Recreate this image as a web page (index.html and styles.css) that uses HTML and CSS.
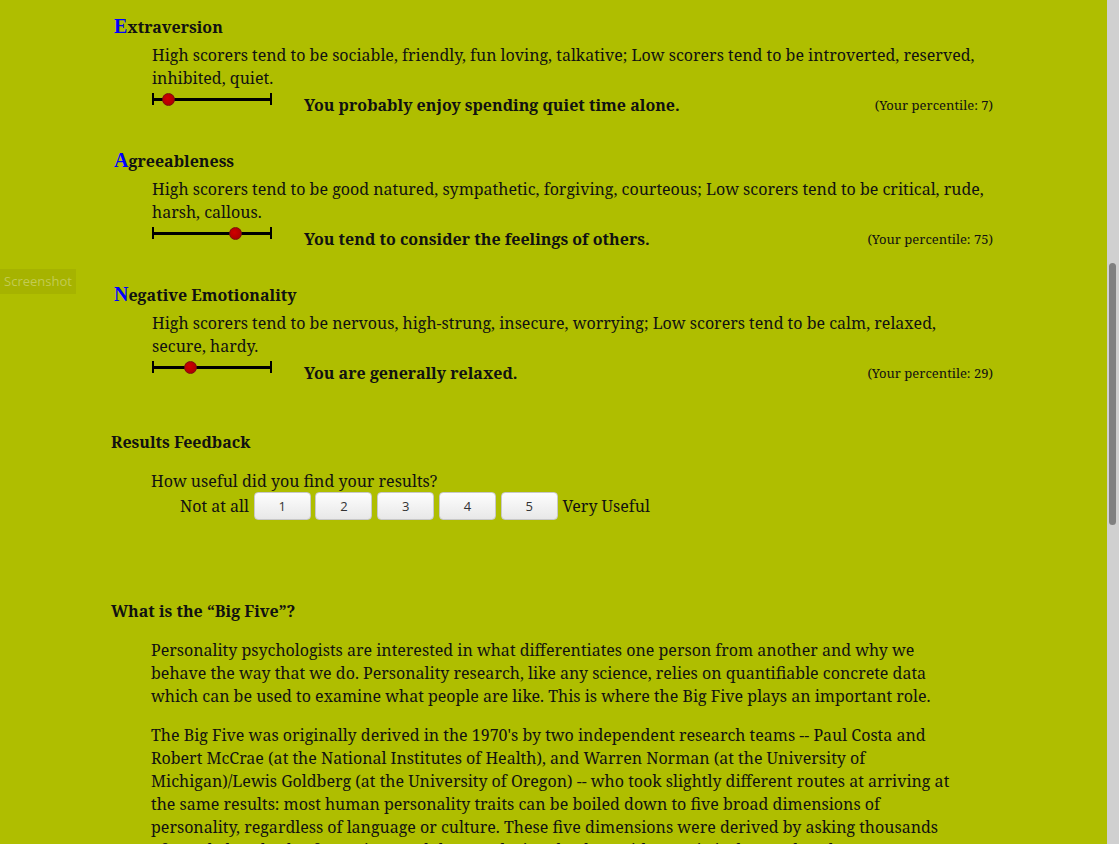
FILE: index.html
```html
<!DOCTYPE html>
<html>
<head>
<meta charset="utf-8">
<link rel="stylesheet" href="styles.css">
</head>
<body>
<div class="tab">Screenshot</div>
<div class="page">
  <div class="trait">
    <h3 class="trait-title"><span class="init">E</span>xtraversion</h3>
    <div class="trait-body">
      <p class="desc">High scorers tend to be sociable, friendly, fun loving, talkative; Low scorers tend to be introverted, reserved, inhibited, quiet.</p>
      <div class="result">
        <div class="scale"><span class="dot" style="left: 12%"></span></div>
        <div class="verdict">You probably enjoy spending quiet time alone.</div>
        <div class="pct">(Your percentile: 7)</div>
      </div>
    </div>
  </div>
  <div class="trait">
    <h3 class="trait-title"><span class="init">A</span>greeableness</h3>
    <div class="trait-body">
      <p class="desc">High scorers tend to be good natured, sympathetic, forgiving, courteous; Low scorers tend to be critical, rude, harsh, callous.</p>
      <div class="result">
        <div class="scale"><span class="dot" style="left: 70%"></span></div>
        <div class="verdict">You tend to consider the feelings of others.</div>
        <div class="pct">(Your percentile: 75)</div>
      </div>
    </div>
  </div>
  <div class="trait">
    <h3 class="trait-title"><span class="init">N</span>egative Emotionality</h3>
    <div class="trait-body">
      <p class="desc">High scorers tend to be nervous, high-strung, insecure, worrying; Low scorers tend to be calm, relaxed, secure, hardy.</p>
      <div class="result">
        <div class="scale"><span class="dot" style="left: 31%"></span></div>
        <div class="verdict">You are generally relaxed.</div>
        <div class="pct">(Your percentile: 29)</div>
      </div>
    </div>
  </div>

  <h3 class="section-title feedback-title">Results Feedback</h3>
  <div class="feedback">
    <div class="question">How useful did you find your results?</div>
    <div class="rating">
      <span class="rating-label">Not at all</span>
      <button class="rate">1</button>
      <button class="rate">2</button>
      <button class="rate">3</button>
      <button class="rate">4</button>
      <button class="rate">5</button>
      <span class="rating-label">Very Useful</span>
    </div>
  </div>

  <h3 class="section-title bigfive-title">What is the “Big Five”?</h3>
  <div class="article">
    <p>Personality psychologists are interested in what differentiates one person from another and why we behave the way that we do. Personality research, like any science, relies on quantifiable concrete data which can be used to examine what people are like. This is where the Big Five plays an important role.</p>
    <p>The Big Five was originally derived in the 1970's by two independent research teams -- Paul Costa and Robert McCrae (at the National Institutes of Health), and Warren Norman (at the University of Michigan)/Lewis Goldberg (at the University of Oregon) -- who took slightly different routes at arriving at the same results: most human personality traits can be boiled down to five broad dimensions of personality, regardless of language or culture. These five dimensions were derived by asking thousands of people hundreds of questions and then analyzing the data with a statistical procedure known as factor analysis.</p>
  </div>
</div>
<div class="scrollbar"><div class="thumb"></div></div>
</body>
</html>
```
FILE: styles.css
```css
html, body {
  margin: 0;
  padding: 0;
  height: 100%;
  overflow: hidden;
}
body {
  background: #afbe00;
  font-family: "Noto Serif", "Droid Serif", "DejaVu Serif", serif;
  font-size: 16px;
  color: #111;
}
.page {
  width: 900px;
  padding: 14px 0 0 111px;
}
.tab {
  position: absolute;
  left: 0;
  top: 269px;
  width: 76px;
  height: 25px;
  background: rgba(150, 160, 0, 0.35);
  color: rgba(205, 212, 110, 0.75);
  font-family: "Open Sans", "Noto Sans", sans-serif;
  font-size: 13px;
  line-height: 25px;
  text-align: center;
}
.trait {
  margin-bottom: 28px;
}
.trait-title {
  margin: 0 0 0 3px;
  font-size: 16px;
  font-weight: bold;
  line-height: 24px;
}
.init {
  color: #0000ff;
  font-family: "Liberation Serif", "Times New Roman", serif;
  font-size: 20px;
  font-weight: bold;
}
.trait-body {
  padding-left: 41px;
}
.desc {
  margin: 5px 0 0;
  width: 836px;
  line-height: 23px;
}
.result {
  display: flex;
  align-items: center;
  height: 30px;
  width: 841px;
}
.scale {
  position: relative;
  width: 116px;
  height: 12px;
  border-left: 2px solid #000;
  border-right: 2px solid #000;
  margin-top: -12px;
  flex: none;
}
.scale::before {
  content: "";
  position: absolute;
  left: 0;
  right: 0;
  top: 5px;
  height: 3px;
  background: #000;
}
.dot {
  position: absolute;
  top: 0;
  width: 11px;
  height: 11px;
  margin-left: -6px;
  border-radius: 50%;
  background: radial-gradient(circle at 40% 40%, #d00000, #a00000);
  border: 1px solid #7a1010;
}
.verdict {
  font-weight: bold;
  margin-left: 32px;
  flex: 1;
}
.pct {
  font-size: 13px;
}
.section-title {
  margin: 0;
  font-size: 16px;
  font-weight: bold;
  line-height: 24px;
}
.feedback-title {
  margin-top: 42px;
}
.feedback {
  padding-left: 40px;
  margin-top: 16px;
}
.question {
  line-height: 22px;
}
.rating {
  display: flex;
  align-items: center;
  gap: 4.75px;
  padding-left: 29px;
}
.rating-label {
  line-height: 28px;
}
.rate {
  width: 57px;
  height: 28px;
  margin: 0;
  border: 1px solid #c8c8c8;
  border-radius: 4px;
  background: linear-gradient(#fdfdfd, #e8e8e8);
  font-family: "Open Sans", "Noto Sans", sans-serif;
  font-size: 13px;
  color: #333;
  padding: 0;
}
.bigfive-title {
  margin-top: 79px;
}
.article {
  padding-left: 40px;
  width: 800px;
  margin-top: 16px;
}
.article p {
  margin: 0 0 16px;
  line-height: 23px;
}
.scrollbar {
  position: absolute;
  right: 0;
  top: 0;
  width: 12px;
  height: 844px;
  background: #d0d0d0;
}
.thumb {
  position: absolute;
  left: 2px;
  top: 263px;
  width: 7px;
  height: 262px;
  border-radius: 4px;
  background: #808080;
}
```
